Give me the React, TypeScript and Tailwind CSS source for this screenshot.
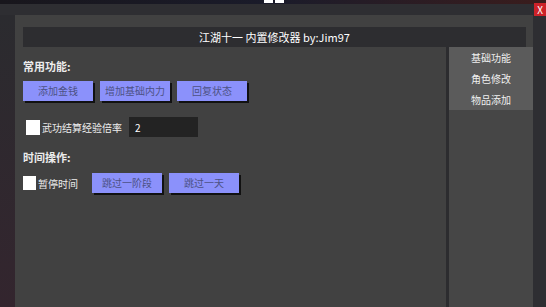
import { useState } from "react";

const font = { fontFamily: '"Noto Sans CJK SC", "Noto Sans", sans-serif' };

function PurpleButton({ label }: { label: string }) {
    return (
        <button className="w-[70px] h-[20px] bg-[#8b91fb] text-[#4d5185] text-[10px] leading-none shadow-[2px_2px_0_#111]">
            {label}
        </button>
    );
}

function CheckBox({ checked, onClick, size }: { checked: boolean; onClick: () => void; size: string }) {
    return (
        <div onClick={onClick} className={`${size} bg-white grid place-items-center text-[10px] text-black`}>
            {checked ? "✓" : ""}
        </div>
    );
}

export default function App() {
    const [expChecked, setExpChecked] = useState(false);
    const [pauseChecked, setPauseChecked] = useState(false);
    const [rate, setRate] = useState("2");
    const tabs = ["基础功能", "角色修改", "物品添加"];

    return (
        <div className="w-[546px] h-[307px] relative overflow-hidden flex flex-col bg-[#2e2e32]" style={font}>
            {/* game behind */}
            <div className="h-[4px] relative bg-gradient-to-r from-[#18161c] via-[#1a1b2a] to-[#3a1c1c]">
                <div className="absolute left-[264px] top-0 w-[9px] h-[3px] bg-white" />
                <div className="absolute left-[275px] top-0 w-[9px] h-[3px] bg-white" />
            </div>

            {/* window */}
            <div className="flex-1 flex pt-[11px] pr-[13px]">
                <div className="w-[15px] bg-gradient-to-b from-[#2b2b2f] to-[#33252e]" />
                <div className="flex-1 bg-[#414141] flex flex-col">
                    <div className="pt-[12px] pl-[8px] pr-[7px]">
                        <div className="h-[20px] bg-[#2d2d30] flex items-center justify-center text-white text-[11px]">
                            江湖十一 内置修改器 by:Jim97
                        </div>
                    </div>
                    <div className="flex-1 flex">
                        {/* main */}
                        <div className="flex-1 flex flex-col pl-[8px] pt-[12px] text-[#ececec] text-[10px]">
                            <div className="font-bold text-[11px] leading-[14px]">常用功能:</div>
                            <div className="flex gap-[7px] mt-[8px]">
                                <PurpleButton label="添加金钱" />
                                <PurpleButton label="增加基础内力" />
                                <PurpleButton label="回复状态" />
                            </div>
                            <div className="flex items-center mt-[16px] pl-[3px]">
                                <CheckBox size="w-[14px] h-[15px]" checked={expChecked} onClick={() => setExpChecked(!expChecked)} />
                                <span className="ml-[2px] w-[87px]">武功结算经验倍率</span>
                                <input
                                    className="w-[69px] h-[20px] bg-[#232323] text-white text-[10px] px-[6px] outline-none"
                                    value={rate}
                                    onChange={(e) => setRate(e.target.value)}
                                />
                            </div>
                            <div className="font-bold text-[11px] leading-[14px] mt-[13px]">时间操作:</div>
                            <div className="flex items-center mt-[9px]">
                                <CheckBox size="w-[13px] h-[14px]" checked={pauseChecked} onClick={() => setPauseChecked(!pauseChecked)} />
                                <span className="ml-[2px] w-[54px]">暂停时间</span>
                                <div className="flex gap-[7px]">
                                    <PurpleButton label="跳过一阶段" />
                                    <PurpleButton label="跳过一天" />
                                </div>
                            </div>
                        </div>
                        <div className="w-[3px] bg-[#2c2c2f]" />
                        {/* tabs */}
                        <div className="w-[84px] bg-[#464646]">
                            <div className="bg-[#5b5b5b] flex flex-col">
                                {tabs.map((t) => (
                                    <div key={t} className="h-[21px] flex items-center justify-center text-[10px] text-[#f0f0f0]">
                                        {t}
                                    </div>
                                ))}
                            </div>
                        </div>
                    </div>
                </div>
            </div>

            <button className="absolute right-0 top-[3px] w-[12px] h-[13px] bg-[#cc2229] text-white text-[10px] leading-none grid place-items-center">
                X
            </button>
        </div>
    );
}
